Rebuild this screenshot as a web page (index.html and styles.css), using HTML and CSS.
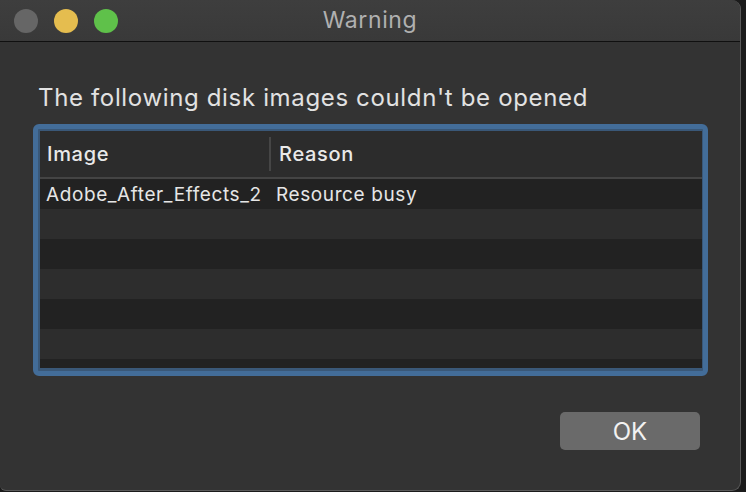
FILE: index.html
```html
<!DOCTYPE html>
<html lang="en">
<head>
    <meta charset="UTF-8">
    <title>Warning</title>
<link rel="stylesheet" href="styles.css">
</head>
<body>
    <div id="win">
        <div class="titlebar">
            <div class="lights">
                <span class="dot gray"></span>
                <span class="dot yellow"></span>
                <span class="dot green"></span>
            </div>
            <div class="title">Warning</div>
            <div></div>
        </div>
        <div class="content">
            <p class="msg">The following disk images couldn't be opened</p>
            <div class="ring">
                <div class="table">
                    <div class="head">
                        <div class="col1">Image</div>
                        <div class="col2 sep">Reason</div>
                    </div>
                    <div class="row dark"><div class="col1">Adobe_After_Effects_2</div><div class="col2">Resource busy</div></div>
                    <div class="row"></div>
                    <div class="row dark"></div>
                    <div class="row"></div>
                    <div class="row dark"></div>
                    <div class="row"></div>
                    <div class="row dark last"></div>
                </div>
            </div>
            <div class="btn_box">
                <button id="ok">OK</button>
            </div>
        </div>
    </div>
</body>
</html>
```

FILE: styles.css
```css
*{
    margin:0;
    padding:0;
    box-sizing: border-box;
}
body{
    background: #1b1b1b;
    font-family: "Inter", "Liberation Sans", sans-serif;
}
#win{
    width: 741px;
    height: 491px;
    background: #333333;
    border-right: 1px solid #5a5a5a;
    border-bottom: 1px solid #5a5a5a;
    border-radius: 0 9px 9px 6px;
    overflow: hidden;
}
.titlebar{
    height: 42px;
    display: grid;
    grid-template-columns: 1fr auto 1fr;
    align-items: center;
    background: linear-gradient(#3e3e3e, #393939);
    border-bottom: 1px solid #101010;
}
.lights{
    display: flex;
    gap: 16px;
    padding-left: 14px;
}
.dot{
    width: 24px;
    height: 24px;
    border-radius: 50%;
}
.gray{ background: #666666; }
.yellow{ background: #e5bd4f; }
.green{ background: #5fc14a; }
.title{
    color: #b0b0b0;
    font-size: 23px;
    letter-spacing: 0.6px;
    padding-bottom: 1px;
}
.content{
    padding: 42px 33px 0 33px;
}
.msg{
    color: #e2e2e2;
    font-size: 24px;
    letter-spacing: 0.65px;
    line-height: 28px;
    padding-left: 5px;
}
.ring{
    margin-top: 12px;
    width: 675px;
    height: 252px;
    border: 5px solid #436d99;
    border-radius: 6px;
    padding: 2px 1px 0 2px;
    background: #3a5878;
}
.table{
    background: #2b2b2b;
    height: 237px;
    overflow: hidden;
}
.head{
    height: 48px;
    display: flex;
    align-items: center;
    background: #2c2c2c;
    border-bottom: 2px solid #444444;
    color: #e9e9e9;
    font-size: 20px;
    letter-spacing: 0.7px;
    font-weight: 500;
}
.col1{
    width: 229px;
    padding-left: 7px;
    white-space: nowrap;
    overflow: hidden;
}
.col2{
    padding-left: 8px;
}
.sep{
    border-left: 2px solid #464646;
    height: 34px;
    line-height: 34px;
}
.head .col1{
    line-height: 34px;
}
.row{
    height: 30px;
    display: flex;
    align-items: center;
    background: #2d2d2d;
    color: #e6e6e6;
    font-size: 19px;
    letter-spacing: 0.6px;
}
.row .col1{
    padding-left: 6px;
}
.row .col2{
    padding-left: 7px;
}
.dark{
    background: #222222;
}
.btn_box{
    display: flex;
    justify-content: flex-end;
    padding-right: 7px;
    margin-top: 36px;
}
#ok{
    width: 140px;
    height: 38px;
    border: none;
    border-radius: 5px;
    background: #6a6a6a;
    color: #f2f2f2;
    font-family: "Inter", "Liberation Sans", sans-serif;
    font-size: 24px;
}
```
